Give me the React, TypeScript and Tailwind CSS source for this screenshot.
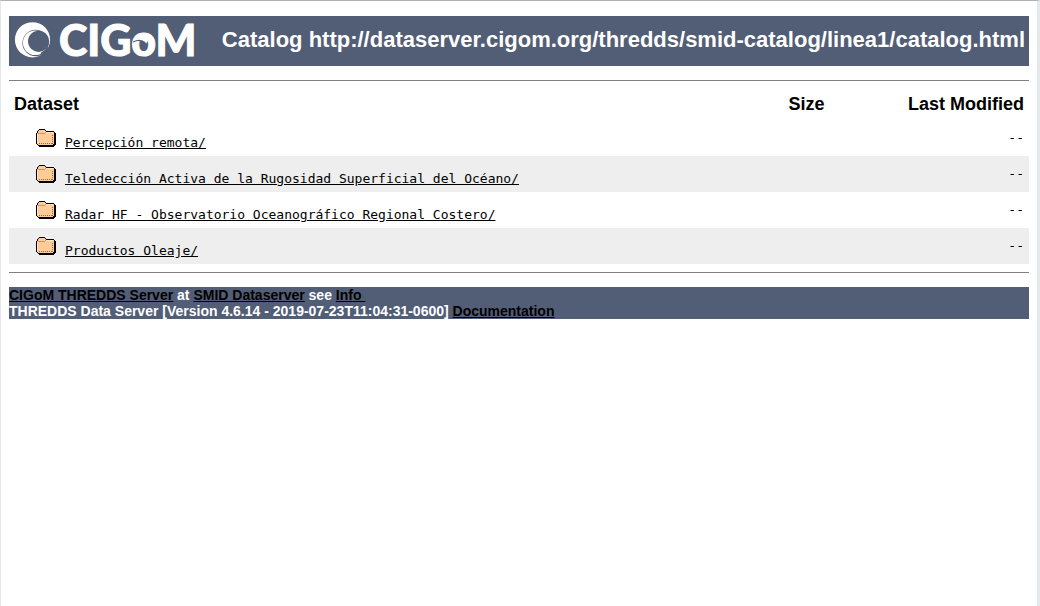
type Dataset = {
    name: string;
    size: string;
    modified: string;
};

const CATALOG_URL =
    'http://dataserver.cigom.org/thredds/smid-catalog/linea1/catalog.html';

const DATASETS: Dataset[] = [
    { name: 'Percepción remota/', size: '', modified: '--' },
    {
        name: 'Teledección Activa de la Rugosidad Superficial del Océano/',
        size: '',
        modified: '--',
    },
    {
        name: 'Radar HF - Observatorio Oceanográfico Regional Costero/',
        size: '',
        modified: '--',
    },
    { name: 'Productos Oleaje/', size: '', modified: '--' },
];

function Logo() {
    return (
        <svg
            viewBox="0 0 190 50"
            className="h-[50px] w-[190px] shrink-0 overflow-visible"
            role="img"
            aria-label="CIGoM"
        >
            {/* Wave emblem */}
            <circle cx="18.5" cy="23.8" r="17.6" fill="#fff" />
            <circle cx="21.6" cy="27" r="13.2" fill="#525d76" />
            <circle cx="21.2" cy="26.8" r="12.3" fill="#fff" />
            <circle cx="24.6" cy="25.3" r="10.6" fill="#525d76" />
            <path d="M37 30L30 41L26.500 37L33.500 32Z" fill="#525d76" />

            {/* Wordmark */}
            <text
                x="45"
                y="40"
                fill="#fff"
                stroke="#fff"
                strokeWidth="1"
                fontSize="43"
                fontWeight="900"
                fontFamily="Lato, 'Liberation Sans', sans-serif"
            >
                CIGoM
            </text>
            {/* Wave crest inside the o */}
            <path
                d="M124 22.500Q131 17.500 136.500 24Q133.500 23.500 132.500 27.500Q129.500 23.500 124 25Z"
                fill="#fff"
            />
            <path
                d="M119 26Q126.500 22.500 131 27"
                fill="none"
                stroke="#525d76"
                strokeWidth="1.2"
            />
        </svg>
    );
}

function FolderIcon() {
    return (
        <svg
            viewBox="0 0 20 18"
            className="mb-1 h-[18px] w-5 shrink-0"
            shapeRendering="crispEdges"
            aria-hidden="true"
        >
            <path
                d="M3 0h6v1h1v1h8v1h1v1h1v12h-1v1h-1v1H3v-1H2v-1H1v-1H0V4h1V2h1V1h1z"
                fill="#000"
            />
            <path d="M3 1h6v1h1v1h8v12h-1v1H2v-1H1V4h1V2h1z" fill="#ffcc99" />
            <path d="M2 4h7v1H2zM9 3h1v1H9z" fill="#cc9966" />
            <path d="M1 5h1v9H1zM10 3h7v1h-7z" fill="#ffe5cc" />
            <path
                d="M16.500 6v9M3 14.500h13"
                fill="none"
                stroke="#996633"
                strokeWidth="1"
                strokeDasharray="1 1"
            />
            <path d="M18 4h1v12h-1zM3 16h15v1H3z" fill="#000" />
        </svg>
    );
}

function CatalogTable() {
    return (
        <table className="w-full border-collapse text-black">
            <thead>
                <tr className="text-lg leading-[21px] font-bold">
                    <th className="p-[5px] text-left">Dataset</th>
                    <th className="w-[12%] py-[5px] pl-1 text-center">Size</th>
                    <th className="w-[16%] p-[5px] text-right whitespace-nowrap">
                        Last Modified
                    </th>
                </tr>
            </thead>
            <tbody className="font-['DejaVu_Sans_Mono',monospace] text-[13px] leading-4">
                {DATASETS.map((dataset) => (
                    <tr key={dataset.name} className="even:bg-[#eeeeee]">
                        <td className="p-[5px]">
                            <div className="flex min-h-[26px] items-end gap-[9px] pl-[22px]">
                                <FolderIcon />
                                <a href="#" className="underline">
                                    {dataset.name}
                                </a>
                            </div>
                        </td>
                        <td className="p-[5px] text-right">{dataset.size}</td>
                        <td className="p-[5px] text-right">
                            {dataset.modified}
                        </td>
                    </tr>
                ))}
            </tbody>
        </table>
    );
}

export default function App() {
    return (
        <div className="min-h-screen border-t border-r-[3px] border-l border-t-[#b0b0b0] border-r-[#e6e9ec] border-l-[#e2e5ea] bg-white px-2 pt-[15px] font-['Liberation_Sans',Arial,sans-serif]">
            <header className="flex min-h-[50px] items-center justify-between gap-4 bg-[#525d76] pr-1 pl-[5px]">
                <Logo />
                <h1 className="pb-0.5 text-[22px] leading-[26px] font-bold text-white">
                    Catalog {CATALOG_URL}
                </h1>
            </header>

            <hr className="mt-3.5 mb-2 border-t border-[#808080]" />

            <CatalogTable />

            <hr className="mt-2 mb-3.5 border-t border-[#808080]" />

            <footer className="bg-[#525d76] text-sm leading-4 font-bold text-white">
                <p>
                    <a href="#" className="text-black underline">
                        CIGoM THREDDS Server
                    </a>{' '}
                    at{' '}
                    <a href="#" className="text-black underline">
                        SMID Dataserver
                    </a>{' '}
                    see{' '}
                    <a href="#" className="text-black underline">
                        Info&nbsp;
                    </a>
                </p>
                <p>
                    THREDDS Data Server [Version 4.6.14 -
                    2019-07-23T11:04:31-0600]{' '}
                    <a href="#" className="text-black underline">
                        Documentation
                    </a>
                </p>
            </footer>
        </div>
    );
}
